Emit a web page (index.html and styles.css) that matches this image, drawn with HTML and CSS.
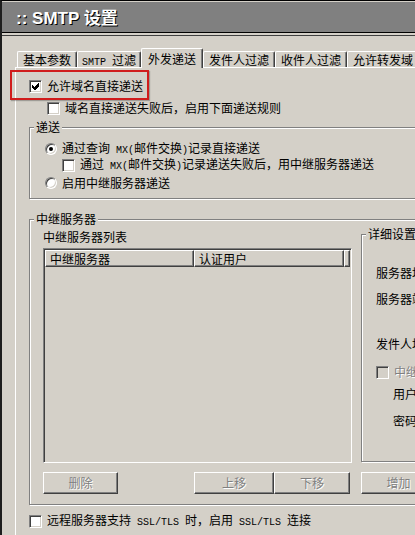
FILE: index.html
```html
<!DOCTYPE html>
<html>
<head>
    <title>SMTP 设置</title>
    <link rel="stylesheet" href="styles.css">
</head>
<body>
    <div class="window">
        <div class="titlebar">:: SMTP 设置</div>

        <div class="content">
            <div class="tabs">
                <div class="tab">基本参数</div>
                <div class="tab smtp"><span class="en">SMTP </span>过滤</div>
                <div class="tab active">外发递送</div>
                <div class="tab">发件人过滤</div>
                <div class="tab">收件人过滤</div>
                <div class="tab">允许转发域</div>
            </div>

            <div class="panel">
                <div class="row hl">
                    <span class="cb"><svg viewBox="0 0 9 9"><polygon points="1,3 3,5 7,1 8,1 8,4 4,8 3,8 1,6"/></svg></span>
                    <span>允许域名直接递送</span>
                    <div class="highlight"></div>
                </div>
                <div class="row sub">
                    <span class="cb"></span>
                    <span>域名直接递送失败后，启用下面递送规则</span>
                </div>

                <div class="group deliver">
                    <div class="group-title">递送</div>
                    <div class="deliver-body">
                        <div class="row">
                            <span class="radio on"></span>
                            <span>通过查询<span class="en"> MX(</span>邮件交换<span class="en">)</span>记录直接递送</span>
                        </div>
                        <div class="row nested">
                            <span class="cb"></span>
                            <span>通过<span class="en"> MX(</span>邮件交换<span class="en">)</span>记录递送失败后，用中继服务器递送</span>
                        </div>
                        <div class="row gap3">
                            <span class="radio"></span>
                            <span>启用中继服务器递送</span>
                        </div>
                    </div>
                </div>

                <div class="group relay">
                    <div class="group-title">中继服务器</div>
                    <div class="relay-body">
                        <div class="list-col">
                            <div class="list-label">中继服务器列表</div>
                            <div class="listview">
                                <div class="lv-head">
                                    <div class="lv-col c1">中继服务器</div>
                                    <div class="lv-col c2">认证用户</div>
                                    <div class="lv-col c3"></div>
                                </div>
                            </div>
                        </div>

                        <div class="group detail">
                            <div class="group-title">详细设置</div>
                            <div class="detail-body">
                                <div class="row d1">服务器地址:</div>
                                <div class="row d2">服务器端口:</div>
                                <div class="row d3">发件人地址:</div>
                                <div class="row d4">
                                    <span class="cb off"></span>
                                    <span class="dis">中继服务器需要身份验证</span>
                                </div>
                                <div class="row d5">用户名:</div>
                                <div class="row d6">密码:</div>
                            </div>
                        </div>

                        <div class="btn-row">
                            <div class="btn del">删除</div>
                            <div class="btn up">上移</div>
                            <div class="btn down">下移</div>
                        </div>
                        <div class="btn-row">
                            <div class="btn add">增加</div>
                        </div>
                    </div>
                </div>

                <div class="row ssl">
                    <span class="cb"></span>
                    <span>远程服务器支持<span class="en"> SSL/TLS </span>时，启用<span class="en"> SSL/TLS </span>连接</span>
                </div>
            </div>
        </div>
    </div>
</body>
</html>
```

FILE: styles.css
```css
html, body { margin: 0; height: 535px; overflow: hidden; }
body { background: #d4d0c8; color: #000; font: 12px/16px "Noto Sans CJK SC", sans-serif; }
.en { font-family: "Liberation Mono", monospace; font-size: 10px; }

.window { width: 640px; height: 535px; box-sizing: border-box; border-left: 2px solid #1e1e1e; border-top: 1px solid #000; padding-top: 1px; }
.titlebar { height: 31px; box-sizing: border-box; padding: 5px 0 0 14px; background: #808080; border-bottom: 1px solid #000;
    color: #fff; font: bold 17px/24px "Liberation Sans", "Noto Sans CJK SC", sans-serif; text-shadow: 1px 1px 0 #000; }

.content { margin-top: 2px; border-top: 1px solid #404040; padding: 12px 0 0 13px; }

/* tabs */
.tabs { display: flex; align-items: flex-end; height: 20px; padding-left: 2px; position: relative; z-index: 1; }
.tab { height: 16px; margin-bottom: 1px; box-sizing: border-box; padding: 0 5px; line-height: 15px; white-space: nowrap;
    border: 1px solid #fff; border-bottom: 0; border-right-color: #404040; box-shadow: inset -1px 0 #808080; border-radius: 2px 2px 0 0; }
.tab.smtp { padding: 0 4px; }
.tab.active { height: 20px; margin-bottom: 0; padding: 2px 6px 0; background: #d4d0c8; }

.panel { margin-top: -1px; border-top: 1px solid #fff; border-left: 1px solid #fff; padding: 10px 0 0 13px; height: 600px; }

/* rows, checkboxes, radios */
.row { display: flex; align-items: center; gap: 5px; height: 16px; white-space: nowrap; }
.row.sub { margin: 6px 0 0 18px; }
.row.nested { margin-left: 17px; }
.row.gap3 { margin-top: 2px; }
.hl { position: relative; }
.highlight { position: absolute; left: -19px; top: -8px; width: 139px; height: 30px; box-sizing: border-box;
    border: 2px solid #d01c1c; box-shadow: 1px 1px 1px rgba(0,0,0,.25); }

.cb { flex: none; width: 13px; height: 13px; box-sizing: border-box; display: flex; align-items: center; justify-content: center;
    background: #fff; border: 1px solid; border-color: #808080 #fff #fff #808080; box-shadow: inset 1px 1px #404040, inset -1px -1px #d4d0c8; }
.cb svg { width: 9px; height: 9px; shape-rendering: crispEdges; }
.cb.off { background: #d4d0c8; }
.radio { flex: none; width: 12px; height: 12px; box-sizing: border-box; border-radius: 50%; display: flex; align-items: center; justify-content: center;
    background: #fff; border: 1px solid; border-color: #808080 #fff #fff #808080; box-shadow: inset 1px 1px #404040, inset -1px -1px #d4d0c8; }
.radio.on::after { content: ""; width: 4px; height: 4px; border-radius: 50%; background: #000; }
.dis { color: #808080; text-shadow: 1px 1px #fff; }

/* group boxes */
.group { border: 1px solid #808080; box-shadow: inset 1px 1px #fff, 1px 1px #fff; }
.group-title { display: table; margin: -9px 0 0 4px; padding: 0 2px; background: #d4d0c8; }
.group.deliver { margin-top: 11px; }
.deliver-body { padding: 6px 0 7px 15px; }
.group.relay { margin-top: 20px; }
.relay-body { display: grid; grid-template-columns: 309px 220px; column-gap: 9px; row-gap: 9px; padding: 2px 0 10px 13px; }

.list-label { margin-bottom: 3px; }
.listview { height: 215px; box-sizing: border-box; padding: 1px; border: 1px solid; border-color: #808080 #fff #fff #808080;
    box-shadow: inset 1px 1px #404040, inset -1px -1px #d4d0c8; }
.lv-head { display: flex; height: 17px; }
.lv-col { box-sizing: border-box; padding-left: 4px; line-height: 15px; border: 1px solid; border-color: #fff #404040 #404040 #fff; box-shadow: inset -1px -1px #808080; }
.lv-col.c1 { width: 149px; }
.lv-col.c2 { width: 150px; }
.lv-col.c3 { flex: 1; }

.group.detail { margin-top: 5px; height: 228px; box-sizing: border-box; }
.detail-body { padding: 23px 0 0 14px; }
.d2 { margin-top: 10px; }
.d3 { margin-top: 29px; }
.d4 { margin-top: 12px; }
.d5 { margin: 6px 0 0 17px; }
.d6 { margin: 11px 0 0 17px; }

/* buttons */
.btn-row { display: flex; }
.btn { height: 22px; box-sizing: border-box; text-align: center; line-height: 19px; color: #808080; text-shadow: 1px 1px #fff;
    border: 1px solid; border-color: #fff #404040 #404040 #fff; box-shadow: inset -1px -1px #808080; }
.btn.del { width: 75px; }
.btn.up { width: 80px; margin-left: 76px; }
.btn.down { width: 76px; }
.btn.add { width: 75px; }

.row.ssl { margin-top: 8px; }
```
